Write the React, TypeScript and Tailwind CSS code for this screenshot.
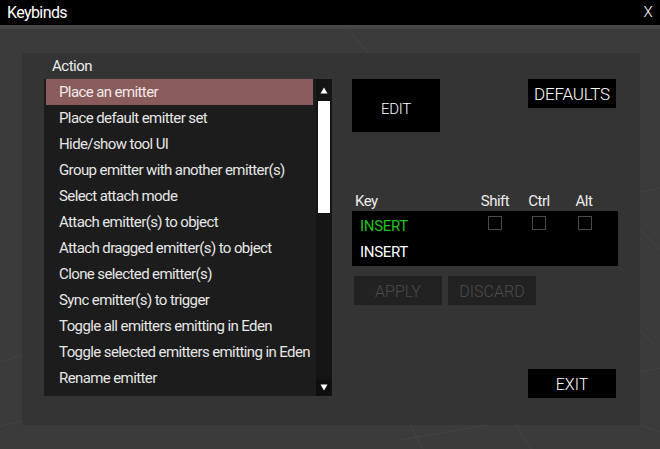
import React from "react";

const actions = [
  "Place an emitter",
  "Place default emitter set",
  "Hide/show tool UI",
  "Group emitter with another emitter(s)",
  "Select attach mode",
  "Attach emitter(s) to object",
  "Attach dragged emitter(s) to object",
  "Clone selected emitter(s)",
  "Sync emitter(s) to trigger",
  "Toggle all emitters emitting in Eden",
  "Toggle selected emitters emitting in Eden",
  "Rename emitter",
  "Toggle emitter playback in Eden",
];

const bindings = [
  { key: "INSERT", active: true },
  { key: "INSERT", active: false },
];

function Backdrop() {
  // faint floor lines painted behind the dialog
  return (
    <svg
      className="absolute inset-0 pointer-events-none"
      width={660}
      height={449}
      viewBox="0 0 660 449"
    >
      <g stroke="#444444" strokeWidth="1" fill="none">
        <line x1="348" y1="29" x2="368" y2="53" />
        <line x1="0" y1="362" x2="22" y2="355" />
        <line x1="0" y1="426" x2="22" y2="421" />
        <line x1="410" y1="425" x2="423" y2="449" />
        <line x1="516" y1="425" x2="531" y2="449" />
        <line x1="487" y1="425" x2="400" y2="440" />
        <line x1="640" y1="230" x2="660" y2="250" />
        <line x1="640" y1="192" x2="660" y2="188" />
        <line x1="640" y1="372" x2="660" y2="368" />
        <line x1="640" y1="330" x2="655" y2="345" />
        <line x1="640" y1="425" x2="660" y2="432" />
      </g>
    </svg>
  );
}

function ActionList() {
  return (
    <div className="flex w-[288px] h-[317px] bg-[#1c1c1c] overflow-hidden">
      <div className="flex flex-col flex-1 pl-[2px] pr-[3px] overflow-hidden">
        {actions.map((a, i) => (
          <div
            key={i}
            className={
              "h-[26px] shrink-0 flex items-center pl-[13px] pt-[1px] whitespace-nowrap text-[15px] tracking-[-0.6px] " +
              (i === 0 ? "bg-[#8a5b5b] text-[#f2eaea]" : "text-[#e6e6e6]")
            }
          >
            {a}
          </div>
        ))}
      </div>
      <div className="w-[16px] flex flex-col bg-[#141414]">
        <div className="h-[22px] flex items-center justify-center">
          <svg width="8" height="7" viewBox="0 0 8 7">
            <path d="M4 0.5 L7.5 6.5 L0.5 6.5 Z" fill="#ffffff" />
          </svg>
        </div>
        <div className="ml-[2px] w-[12px] h-[112px] bg-white" />
        <div className="flex-1" />
        <div className="h-[15px] mb-[1px] mr-[1px] bg-[#0e0e0e] flex items-center justify-center">
          <svg width="8" height="7" viewBox="0 0 8 7">
            <path d="M0.5 0.5 L7.5 0.5 L4 6.5 Z" fill="#ffffff" />
          </svg>
        </div>
      </div>
    </div>
  );
}

function Checkbox() {
  return <div className="w-[14px] h-[14px] border border-[#4a4a4a]" />;
}

export default function App() {
  return (
    <div
      className="relative w-[660px] h-[449px] bg-[#3b3b3b] overflow-hidden"
      style={{ fontFamily: "Roboto, 'Noto Sans', sans-serif" }}
    >
      <Backdrop />
      <div className="relative flex flex-col">
        {/* title bar */}
        <div className="h-[25px] bg-black flex items-center justify-between pl-[7px] pr-[8px] text-white text-[16px] tracking-[-0.6px]">
          <span>Keybinds</span>
          <span className="text-[15px] font-light">X</span>
        </div>
        <div className="h-[4px] bg-[#474747]" />

        {/* dialog body */}
        <div className="mt-[24px] ml-[22px] w-[618px] h-[372px] bg-[#343434] flex pl-[22px]">
          <div className="flex flex-col">
            <div className="h-[26px] flex items-center pl-[8px] pt-[1px] text-[15px] tracking-[-0.5px] text-[#ececec]">
              Action
            </div>
            <ActionList />
          </div>

          <div className="ml-[20px] mt-[26px] w-[266px] flex flex-col">
            <div className="flex justify-between items-start">
              <button className="w-[88px] h-[53px] bg-black text-white text-[15px] tracking-[-0.3px] font-light flex items-center justify-center pt-[8px]">
                EDIT
              </button>
              <button className="w-[88px] h-[29px] mr-[2px] bg-black text-white text-[17px] tracking-[-0.2px] font-light flex items-center justify-center pt-[3px]">
                DEFAULTS
              </button>
            </div>

            <div className="mt-[58px] h-[20px] grid grid-cols-[121px_44px_44px_44px_13px] items-center text-[15px] tracking-[-0.5px] text-[#ececec]">
              <span className="pl-[3px]">Key</span>
              <span className="text-center">Shift</span>
              <span className="text-center">Ctrl</span>
              <span className="text-center pl-[2px]">Alt</span>
              <span />
            </div>

            <div className="mt-[1px] h-[55px] bg-black pt-[2px] flex flex-col">
              {bindings.map((b, i) => (
                <div
                  key={i}
                  className="h-[26px] grid grid-cols-[121px_44px_44px_44px_13px] items-center text-[15px] tracking-[-0.3px]"
                >
                  <span className={"pl-[8px] pt-[1px] " + (b.active ? "text-[#20c020]" : "text-white")}>
                    {b.key}
                  </span>
                  {b.active ? (
                    <>
                      <div className="flex justify-center self-start mt-[3px]">
                        <Checkbox />
                      </div>
                      <div className="flex justify-center self-start mt-[3px]">
                        <Checkbox />
                      </div>
                      <div className="flex justify-center self-start mt-[3px] pl-[3px]">
                        <Checkbox />
                      </div>
                    </>
                  ) : null}
                </div>
              ))}
            </div>

            <div className="mt-[10px] ml-[2px] flex gap-[6px]">
              <button className="w-[88px] h-[29px] bg-[#222222] text-[#4c4c4c] text-[16px] font-light flex items-center justify-center pt-[3px]">
                APPLY
              </button>
              <button className="w-[88px] h-[29px] bg-[#222222] text-[#4c4c4c] text-[16px] font-light flex items-center justify-center pt-[3px]">
                DISCARD
              </button>
            </div>

            <div className="mt-[64px] flex justify-end">
              <button className="w-[88px] h-[29px] mr-[2px] bg-black text-white text-[16px] font-light flex items-center justify-center pt-[2px]">
                EXIT
              </button>
            </div>
          </div>
        </div>
      </div>
    </div>
  );
}
